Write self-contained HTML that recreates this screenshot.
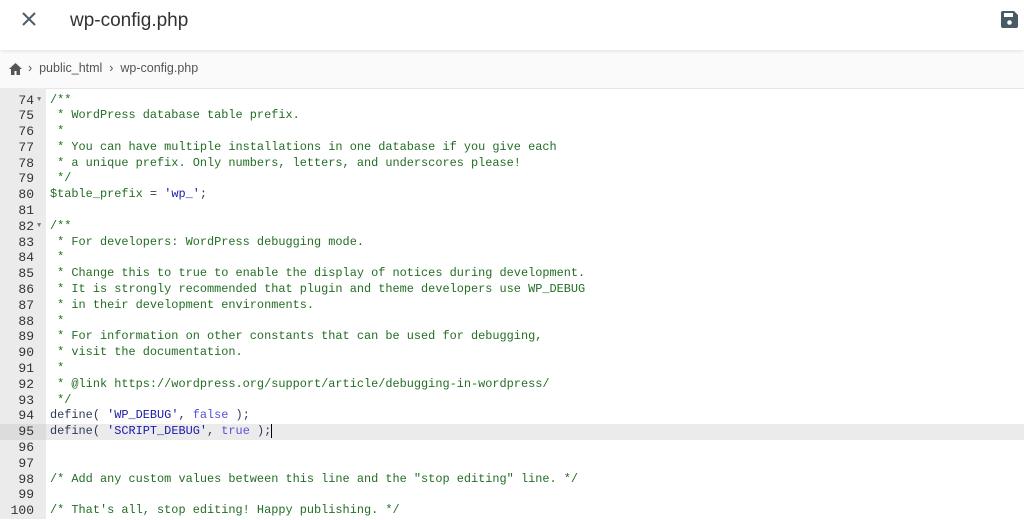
<!DOCTYPE html><html><head><style>
body{margin:0;width:1024px;height:519px;overflow:hidden;background:#fff;font-family:"Liberation Sans",sans-serif;}
.hdr{position:absolute;top:0;left:0;width:1024px;height:50px;background:#fff;box-shadow:0 1px 3px rgba(0,0,0,.12);z-index:2}
.title{position:absolute;left:70px;top:10px;font-size:19px;color:#333}
.bc{position:absolute;top:51px;left:0;width:1024px;height:37px;background:#fafafa;border-bottom:1px solid #e6e6e6;font-size:12.5px;color:#555}
.code{position:absolute;top:92.5px;left:0;width:1024px;font-family:"Liberation Mono",monospace;font-size:11.9px;}
.gut{position:absolute;top:88px;left:0;width:46px;height:431px;background:#ebebeb}
.ln{height:15.8px;line-height:15.8px;white-space:pre;position:relative}
.n{display:inline-block;width:34px;text-align:right;color:#333;font-size:13px}
.t{position:absolute;left:50px;top:0}
.c{color:#236e24}.k{color:#2e3a56}.s{color:#1a1aa6}.b{color:#5850d6}
.act{background:#ebebeb}
.act .n{background:#dcdcdc;width:46px;padding-right:12px;box-sizing:border-box}
.f{position:absolute;left:37px;top:0;font-size:7px;color:#777}
</style></head><body>
<div class="hdr">
<svg style="position:absolute;left:21px;top:11px" width="16" height="16" viewBox="0 0 16 16"><path d="M2 2L14 14M14 2L2 14" stroke="#4d5e6a" stroke-width="2"/></svg>
<div class="title">wp-config.php</div>
<svg style="position:absolute;left:1000px;top:10px" width="19" height="19" viewBox="0 0 19 19"><path d="M1 3a2 2 0 0 1 2-2h11l4 4v11a2 2 0 0 1-2 2H3a2 2 0 0 1-2-2z" fill="#485a66"/><rect x="4" y="3" width="9" height="4" fill="#fff"/><circle cx="9.5" cy="12.5" r="2.3" fill="#fff"/></svg>
</div>
<div class="bc">
<svg style="position:absolute;left:9px;top:12px" width="13" height="12" viewBox="0 0 13 12"><path d="M6.5 0L0 6h2v6h3.5V8h2v4H11V6h2z" fill="#555"/></svg>
<span style="position:absolute;left:28px;top:10px">›&nbsp; public_html &nbsp;›&nbsp; wp-config.php</span>
</div>
<div class="gut"></div>
<div class="code">
<div class="ln"><span class="n">74</span><span class="f">▼</span><span class="t c">/**</span></div>
<div class="ln"><span class="n">75</span><span class="t c"> * WordPress database table prefix.</span></div>
<div class="ln"><span class="n">76</span><span class="t c"> *</span></div>
<div class="ln"><span class="n">77</span><span class="t c"> * You can have multiple installations in one database if you give each</span></div>
<div class="ln"><span class="n">78</span><span class="t c"> * a unique prefix. Only numbers, letters, and underscores please!</span></div>
<div class="ln"><span class="n">79</span><span class="t c"> */</span></div>
<div class="ln"><span class="n">80</span><span class="t"><span class="c">$table_prefix</span><span class="k"> = </span><span class="s">'wp_'</span><span class="k">;</span></span></div>
<div class="ln"><span class="n">81</span></div>
<div class="ln"><span class="n">82</span><span class="f">▼</span><span class="t c">/**</span></div>
<div class="ln"><span class="n">83</span><span class="t c"> * For developers: WordPress debugging mode.</span></div>
<div class="ln"><span class="n">84</span><span class="t c"> *</span></div>
<div class="ln"><span class="n">85</span><span class="t c"> * Change this to true to enable the display of notices during development.</span></div>
<div class="ln"><span class="n">86</span><span class="t c"> * It is strongly recommended that plugin and theme developers use WP_DEBUG</span></div>
<div class="ln"><span class="n">87</span><span class="t c"> * in their development environments.</span></div>
<div class="ln"><span class="n">88</span><span class="t c"> *</span></div>
<div class="ln"><span class="n">89</span><span class="t c"> * For information on other constants that can be used for debugging,</span></div>
<div class="ln"><span class="n">90</span><span class="t c"> * visit the documentation.</span></div>
<div class="ln"><span class="n">91</span><span class="t c"> *</span></div>
<div class="ln"><span class="n">92</span><span class="t c"> * @link https://wordpress.org/support/article/debugging-in-wordpress/</span></div>
<div class="ln"><span class="n">93</span><span class="t c"> */</span></div>
<div class="ln"><span class="n">94</span><span class="t"><span class="k">define( </span><span class="s">'WP_DEBUG'</span><span class="k">, </span><span class="b">false</span><span class="k"> );</span></span></div>
<div class="ln act"><span class="n">95</span><span class="t"><span class="k">define( </span><span class="s">'SCRIPT_DEBUG'</span><span class="k">, </span><span class="b">true</span><span class="k"> );</span><span style="border-left:1.5px solid #000"></span></span></div>
<div class="ln"><span class="n">96</span></div>
<div class="ln"><span class="n">97</span></div>
<div class="ln"><span class="n">98</span><span class="t c">/* Add any custom values between this line and the "stop editing" line. */</span></div>
<div class="ln"><span class="n">99</span></div>
<div class="ln"><span class="n">100</span><span class="t c">/* That's all, stop editing! Happy publishing. */</span></div>
</div>
</body></html>
